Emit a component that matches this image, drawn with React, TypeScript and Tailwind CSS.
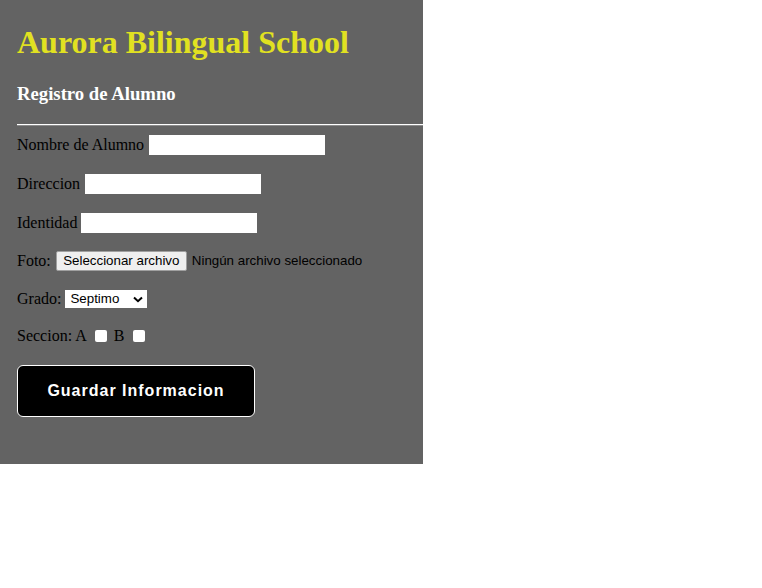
export default function App() {
  const serif = "font-['Liberation_Serif','Times_New_Roman',serif]";
  const sans = "font-['Liberation_Sans',Arial,sans-serif]";

  return (
    <div className="min-h-[588px] w-[762px] bg-white">
      <div className={`w-[423px] bg-[#636363] pt-[24px] pb-[47px] ${serif}`}>
        <h1 className="pl-[17px] text-[32px] leading-[37px] font-bold text-[#e1e121]">
          Aurora Bilingual School
        </h1>
        <h3 className="mt-[22px] pl-[17px] text-[18.72px] leading-[21px] font-bold text-white">
          Registro de Alumno
        </h3>
        <div className="mt-[20px] ml-[17px] h-[2px] border-t border-white border-b border-b-[#8c8c8c]" />

        <div className="pl-[17px] text-[16px] text-black">
          <div className="mt-[9px] flex h-[20px] items-center gap-[5px]">
            <span>Nombre de Alumno</span>
            <div className="h-[20px] w-[176px] bg-white" />
          </div>
          <div className="mt-[19px] flex h-[20px] items-center gap-[5px]">
            <span>Direccion</span>
            <div className="h-[20px] w-[176px] bg-white" />
          </div>
          <div className="mt-[19px] flex h-[20px] items-center gap-[4px]">
            <span>Identidad</span>
            <div className="h-[20px] w-[176px] bg-white" />
          </div>
          <div className="mt-[18px] flex h-[20px] items-center">
            <span>Foto:</span>
            <div
              className={`ml-[5px] flex h-[20px] w-[131px] items-center justify-center rounded-[2px] border border-[#a0a0a0] bg-[#efefef] text-[13.33px] ${sans}`}
            >
              Seleccionar archivo
            </div>
            <span className={`ml-[5px] text-[13.33px] ${sans}`}>Ningún archivo seleccionado</span>
          </div>
          <div className="mt-[19px] flex h-[18px] items-center">
            <span>Grado:</span>
            <div className={`ml-[4px] flex h-[18px] w-[82px] items-center bg-white pl-[5px] pr-[4px] text-[13.33px] ${sans}`}>
              <span className="flex-1">Septimo</span>
              <svg width="10" height="7" viewBox="0 0 10 7" className="mt-[1px]">
                <path d="M1 1.5 L5 5.2 L9 1.5" fill="none" stroke="#000" strokeWidth="2" />
              </svg>
            </div>
          </div>
          <div className="mt-[18px] flex h-[20px] items-center">
            <span>Seccion: A</span>
            <div className="ml-[8px] h-[12px] w-[12px] rounded-[2px] bg-white" />
            <span className="ml-[7px]">B</span>
            <div className="ml-[9px] h-[12px] w-[12px] rounded-[2px] bg-white" />
          </div>
          <button
            className={`mt-[19px] flex h-[52px] w-[238px] items-center justify-center rounded-[6px] border border-white bg-black text-[16px] font-bold tracking-[1px] text-white ${sans}`}
          >
            Guardar Informacion
          </button>
        </div>
      </div>
    </div>
  );
}
